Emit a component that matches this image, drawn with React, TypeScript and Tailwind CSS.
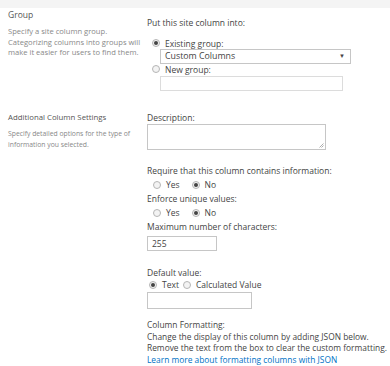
import React from "react";

function Radio({ checked }: { checked?: boolean }) {
  return (
    <span className="inline-flex h-[8px] w-[8px] shrink-0 items-center justify-center rounded-full border border-[#b5b5b5] bg-[#f3f3f3]">
      {checked && <span className="h-[4px] w-[4px] rounded-full bg-[#444]" />}
    </span>
  );
}

function RadioOption({ checked, label }: { checked?: boolean; label: string }) {
  return (
    <span className="inline-flex items-center gap-[5px]">
      <Radio checked={checked} />
      <span>{label}</span>
    </span>
  );
}

export default function App() {
  return (
    <div
      className="h-[366px] w-[390px] overflow-hidden bg-white text-[8.5px] leading-[11px] text-[#444]"
      style={{ fontFamily: '"Open Sans", "Noto Sans", sans-serif' }}
    >
      <div className="h-[8px] bg-[#f4f4f4]" />

      {/* Group */}
      <div className="flex">
        <div className="w-[147px] shrink-0 pl-[8px] pr-[2px]">
          <div className="mt-[1px] text-[8.5px] text-[#555]">Group</div>
          <div className="mt-[6px] whitespace-nowrap text-[7.6px] leading-[10.5px] text-[#888]">
            <div>Specify a site column group.</div>
            <div>Categorizing columns into groups will</div>
            <div>make it easier for users to find them.</div>
          </div>
        </div>
        <div className="flex-1">
          <div className="mt-[9px]">Put this site column into:</div>
          <div className="mt-[8px] ml-[5px]">
            <RadioOption checked label="Existing group:" />
          </div>
          <div className="ml-[13px] flex h-[15px] w-[191px] items-center justify-between border border-[#c6c6c6] pl-[4px] pr-[5px] text-[8.8px]">
            <span>Custom Columns</span>
            <span className="text-[6px]">▼</span>
          </div>
          <div className="ml-[5px]">
            <RadioOption label="New group:" />
          </div>
          <div className="ml-[13px] mt-[1px] h-[15px] w-[183px] border border-[#dcdcdc]" />
        </div>
      </div>

      {/* Additional Column Settings */}
      <div className="mt-[21px] flex">
        <div className="w-[147px] shrink-0 pl-[8px] pr-[2px]">
          <div className="text-[7.8px] text-[#555]">Additional Column Settings</div>
          <div className="mt-[5px] whitespace-nowrap text-[6.8px] leading-[11px] text-[#888]">
            <div>Specify detailed options for the type of</div>
            <div>information you selected.</div>
          </div>
        </div>
        <div className="flex-1">
          <div>Description:</div>
          <div className="relative mt-[1px] h-[26px] w-[179px] border border-[#c6c6c6]">
            <svg className="absolute bottom-[1px] right-[1px]" width="5" height="5" viewBox="0 0 5 5">
              <path d="M4.5 0.5 L0.5 4.5 M4.5 2.5 L2.5 4.5" stroke="#999" strokeWidth="0.8" />
            </svg>
          </div>

          <div className="mt-[15px]">Require that this column contains information:</div>
          <div className="mt-[3px] ml-[6px] flex gap-[12px]">
            <RadioOption label="Yes" />
            <RadioOption checked label="No" />
          </div>
          <div className="mt-[3px]">Enforce unique values:</div>
          <div className="mt-[3px] ml-[6px] flex gap-[12px]">
            <RadioOption label="Yes" />
            <RadioOption checked label="No" />
          </div>
          <div className="mt-[3px]">Maximum number of characters:</div>
          <div className="mt-[4px] flex h-[15px] w-[70px] items-center border border-[#c6c6c6] pl-[4px]">255</div>

          <div className="mt-[16px]">Default value:</div>
          <div className="mt-[1px] ml-[2px] flex gap-[4px]">
            <RadioOption checked label="Text" />
            <RadioOption label="Calculated Value" />
          </div>
          <div className="mt-[2px] h-[17px] w-[105px] border border-[#c6c6c6]" />

          <div className="mt-[10px] whitespace-nowrap text-[8.4px] leading-[11.5px]">
            <div>Column Formatting:</div>
            <div>Change the display of this column by adding JSON below.</div>
            <div>Remove the text from the box to clear the custom formatting.</div>
            <div className="text-[#0072c6]">Learn more about formatting columns with JSON</div>
          </div>
        </div>
      </div>
    </div>
  );
}
